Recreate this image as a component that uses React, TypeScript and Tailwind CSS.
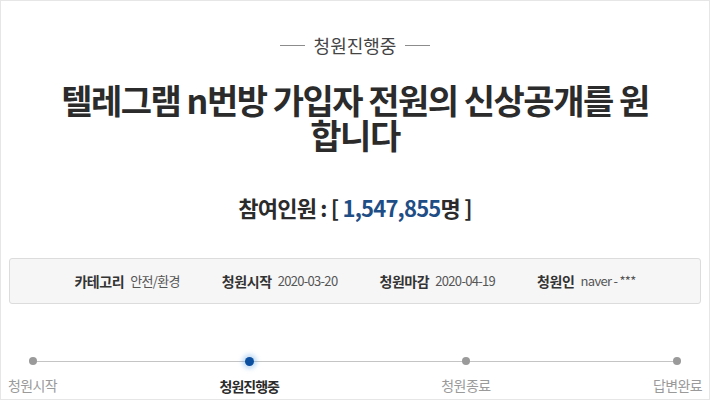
const font = { fontFamily: '"Noto Sans CJK KR", "Noto Sans", sans-serif' }

const steps = [
  { label: '청원시작', active: false },
  { label: '청원진행중', active: true },
  { label: '청원종료', active: false },
  { label: '답변완료', active: false },
]

const info = [
  { label: '카테고리', value: '안전/환경' },
  { label: '청원시작', value: '2020-03-20' },
  { label: '청원마감', value: '2020-04-19' },
  { label: '청원인', value: 'naver - ***' },
]

export default function App() {
  return (
    <div
      className="w-[710px] h-[400px] overflow-hidden bg-white border border-[#e6e6e6] flex flex-col items-center px-[8px]"
      style={font}
    >
      {/* status heading */}
      <div className="mt-[31px] flex items-center gap-[9px] text-[#444]">
        <span className="block w-[25px] h-px bg-[#8c8c8c]" />
        <span className="text-[18px] leading-[26px]">청원진행중</span>
        <span className="block w-[25px] h-px bg-[#8c8c8c]" />
      </div>

      {/* title */}
      <h1 className="mt-[24px] w-[620px] text-center text-[34px] leading-[35px] font-bold tracking-[-1.5px] text-[#2b2b2b]">
        텔레그램 n번방 가입자 전원의 신상공개를 원 합니다
      </h1>

      {/* participants */}
      <div className="mt-[40px] text-[22px] leading-[30px] font-bold tracking-[-0.8px] text-[#2b2b2b]">
        참여인원 : [ <span className="text-[#1f4e86]">1,547,855</span>
        <span className="text-[#2b2b2b]">명</span> ]
      </div>

      {/* info box */}
      <div className="mt-[36px] w-full h-[46px] shrink-0 rounded-[3px] border border-[#dcdcdc] bg-[#f6f6f6] flex items-center justify-center gap-[42px]">
        {info.map((item) => (
          <div key={item.label} className="flex items-center gap-[6px]">
            <span className="text-[14px] font-bold tracking-[-0.4px] text-[#333]">{item.label}</span>
            <span className="text-[13px] tracking-[-0.7px] text-[#555]">{item.value}</span>
          </div>
        ))}
      </div>

      {/* progress */}
      <div className="relative mt-[53px] w-[710px] shrink-0 px-[8px] flex justify-between">
        <div className="absolute left-[31px] right-[31px] top-[4px] h-px bg-[#c4c4c4]" />
        {steps.map((step) => (
          <div key={step.label} className="relative flex flex-col items-center">
            {step.active ? (
              <span className="block w-[9px] h-[9px] rounded-full bg-[#0b4fa0] shadow-[0_0_4px_3px_rgba(90,160,230,0.35)]" />
            ) : (
              <span className="block w-[8px] h-[8px] rounded-full bg-[#9a9a9a]" />
            )}
            <span
              className={`mt-[10px] text-[14px] leading-[20px] ${
                step.active ? 'font-bold tracking-[-1px] text-[#2b2b2b]' : 'tracking-[-0.6px] text-[#9a9a9a]'
              }`}
            >
              {step.label}
            </span>
          </div>
        ))}
      </div>
    </div>
  )
}
